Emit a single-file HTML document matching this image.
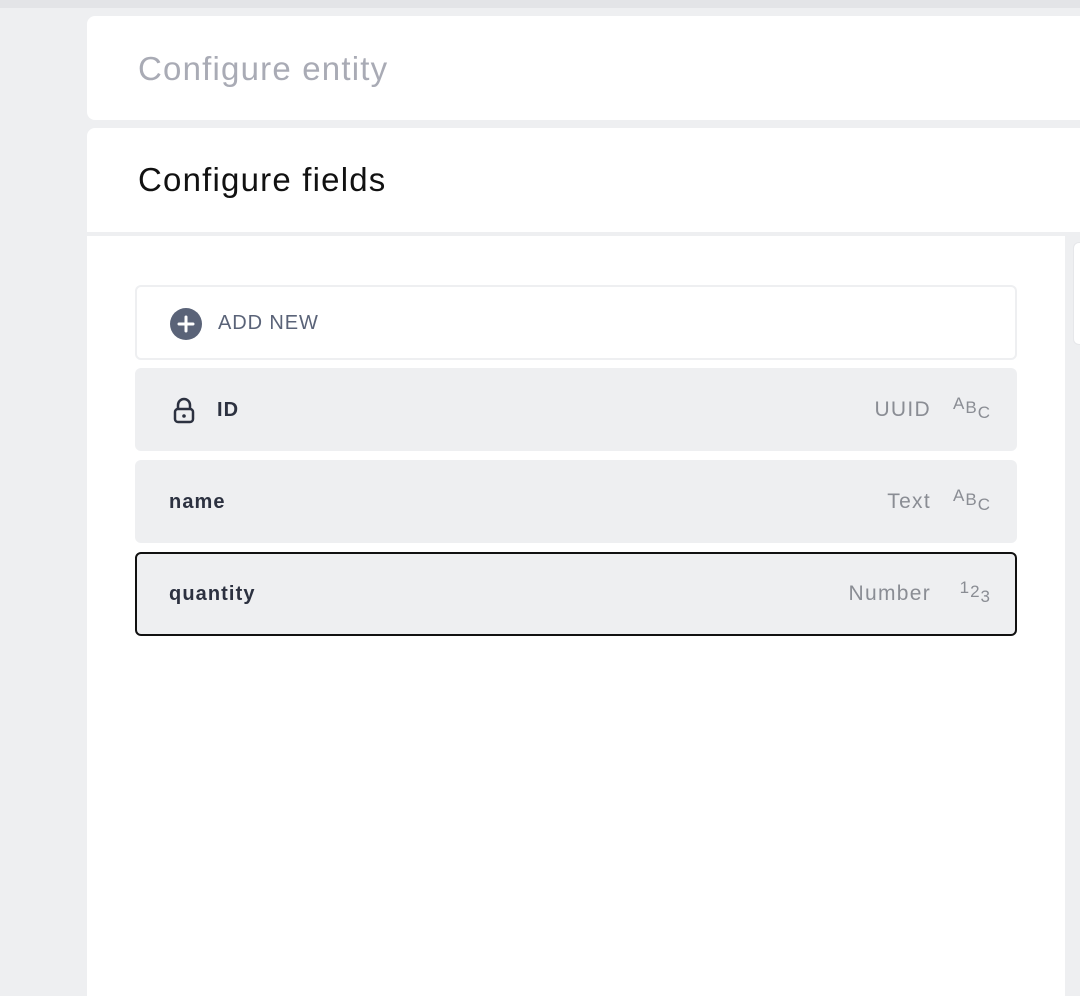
<!DOCTYPE html>
<html><head><style>
*{margin:0;padding:0;box-sizing:border-box}
body{width:1080px;height:992px;background:#eeeff1;font-family:"Liberation Sans",sans-serif;position:relative;overflow:hidden}
.top{position:absolute;left:0;top:0;width:1080px;height:8px;background:#e3e4e7}
.card1{position:absolute;left:87px;top:16px;width:1010px;height:104px;background:#fff;border-radius:8px}
.card1 span{position:absolute;left:51px;top:34px;font-size:33px;color:#a9abb5;letter-spacing:1.2px}
.card2{position:absolute;left:87px;top:128px;width:1010px;height:104px;background:#fff;border-radius:8px 8px 0 0}
.card2 span{position:absolute;left:51px;top:33px;font-size:33px;color:#111;letter-spacing:1.2px}
.content{position:absolute;left:87px;top:236px;width:978px;height:760px;background:#fff}
.side{position:absolute;left:1073px;top:242px;width:20px;height:103px;background:#fff;border:1px solid #e6e7ea;border-radius:6px}
.row{position:absolute;left:135px;width:882px;border-radius:6px;background:#eeeff1}
.add{top:285px;height:75px;background:#fff;border:2px solid #eeeff1}
.lbl{position:absolute;left:34px;font-size:20px;font-weight:bold;color:#2c3140;letter-spacing:1.1px}
.type{position:absolute;right:86px;font-size:21px;color:#8a8d94;letter-spacing:1.3px}
.ic{position:absolute;right:26px;font-size:17px;color:#8a8d94;letter-spacing:1px}
</style></head><body>
<div class="top"></div>
<div class="card1"><span>Configure entity</span></div>
<div class="card2"><span>Configure fields</span></div>
<div class="content"></div>
<div class="side"></div>
<div class="row add">
<svg style="position:absolute;left:33px;top:21px" width="32" height="32" viewBox="0 0 32 32"><circle cx="16" cy="16" r="16" fill="#5a6378"/><path d="M16 9v14M9 16h14" stroke="#fff" stroke-width="3" stroke-linecap="round"/></svg>
<span style="position:absolute;left:81px;top:25px;font-size:20px;color:#5a6378;letter-spacing:.9px">ADD NEW</span>
</div>
<div class="row" style="top:368px;height:83px">
<svg style="position:absolute;left:38px;top:29px" width="22" height="27" viewBox="0 0 22 27"><path d="M5 12V8a6 6 0 0 1 12 0v4" fill="none" stroke="#2c3140" stroke-width="2.5"/><rect x="2" y="12" width="18" height="13" rx="3" fill="none" stroke="#2c3140" stroke-width="2.5"/><circle cx="11" cy="19" r="1.8" fill="#2c3140"/></svg>
<span class="lbl" style="left:82px;top:31px">ID</span>
<span class="type" style="top:30px">UUID</span>
<span class="ic" style="top:26px">A<span style="position:relative;top:4px">B</span><span style="position:relative;top:9px">C</span></span>
</div>
<div class="row" style="top:460px;height:83px">
<span class="lbl" style="top:31px">name</span>
<span class="type" style="top:30px">Text</span>
<span class="ic" style="top:26px">A<span style="position:relative;top:4px">B</span><span style="position:relative;top:9px">C</span></span>
</div>
<div class="row" style="top:552px;height:84px;border:2px solid #111">
<span class="lbl" style="left:32px;top:29px">quantity</span>
<span class="type" style="right:84px;top:28px">Number</span>
<span class="ic" style="right:24px;top:24px">1<span style="position:relative;top:4px">2</span><span style="position:relative;top:9px">3</span></span>
</div>
</body></html>
